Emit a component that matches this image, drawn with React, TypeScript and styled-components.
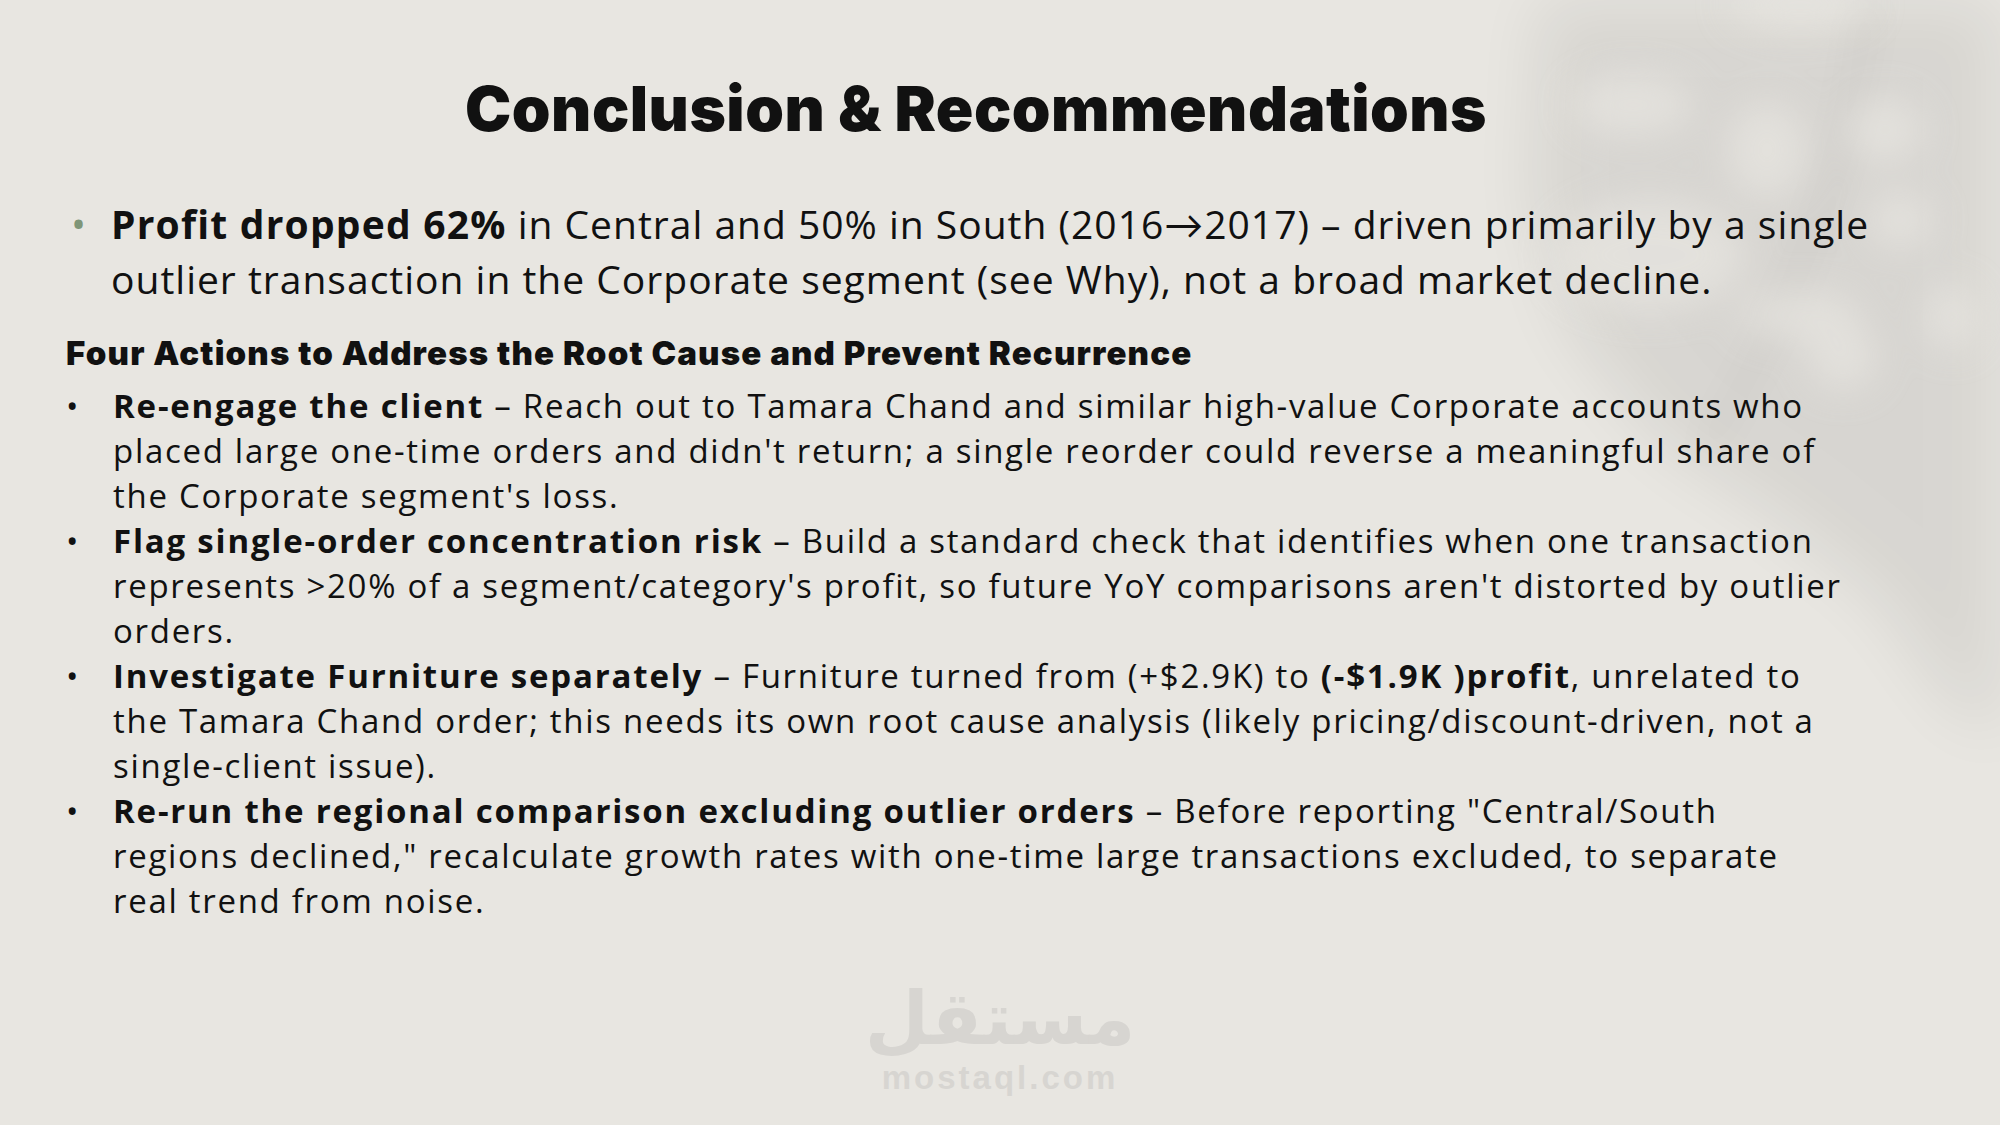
import React from "react";
import styled, { createGlobalStyle } from "styled-components";

const GlobalStyle = createGlobalStyle`
  html, body {
    margin: 0;
    padding: 0;
    background: #e8e6e1;
  }
  * {
    box-sizing: border-box;
  }
`;

const Slide = styled.div`
  position: relative;
  width: 2000px;
  height: 1125px;
  overflow: hidden;
  background: #e8e6e1;
  font-family: "Open Sans", Lato, sans-serif;
  color: #111;
`;

const Shadow = styled.svg`
  position: absolute;
  top: 0;
  right: 0;
  pointer-events: none;
`;

const Content = styled.div`
  position: relative;
  display: flex;
  flex-direction: column;
  padding: 77px 114px 0 66px;
`;

const Title = styled.h1`
  margin: 0;
  text-align: center;
  font-family: Inter, "Liberation Sans", sans-serif;
  font-weight: 900;
  font-size: 62px;
  line-height: 64px;
  letter-spacing: 0.5px;
  white-space: nowrap;
`;

const Lead = styled.ul`
  margin: 55px 0 0 0;
  padding: 0;
  list-style: none;
`;

const LeadItem = styled.li`
  display: flex;
  font-size: 39px;
  line-height: 55px;
  letter-spacing: 1px;
  white-space: nowrap;
`;

const GreenDot = styled.span`
  flex: none;
  width: 45px;
  padding-left: 5px;
  color: #7f9678;
  font-size: 40px;
`;

const Section = styled.h2`
  margin: 27px 0 0 0;
  font-family: Inter, "Liberation Sans", sans-serif;
  font-weight: 900;
  font-size: 33px;
  line-height: 40px;
  letter-spacing: 1.15px;
`;

const Actions = styled.ul`
  margin: 10px 0 0 0;
  padding: 0;
  list-style: none;
`;

const Action = styled.li`
  display: flex;
  font-size: 33px;
  line-height: 45px;
  letter-spacing: 1.7px;
  white-space: nowrap;
`;

const Dot = styled.span`
  flex: none;
  width: 47px;
`;

const Text = styled.span`
  flex: 1;
`;

const B = styled.b<{ $spacing: number }>`
  font-weight: 700;
  letter-spacing: ${(p) => p.$spacing}px;
`;

const Mark = styled.div`
  position: absolute;
  left: 0;
  right: 0;
  top: 975px;
  display: flex;
  flex-direction: column;
  align-items: center;
  color: #d7d5d1;
  font-family: "DejaVu Sans", sans-serif;
  font-weight: 700;
`;

const MarkArabic = styled.div`
  font-size: 74px;
  line-height: 86px;
`;

const MarkLatin = styled.div`
  font-family: "Liberation Sans", sans-serif;
  font-size: 33px;
  line-height: 34px;
  letter-spacing: 3px;
`;

const actions = [
  {
    head: "Re-engage the client",
    body: (
      <>
        Reach out to Tamara Chand and similar high-value Corporate accounts who
        <br />
        placed large one-time orders and didn't return; a single reorder could reverse a meaningful share of
        <br />
        the Corporate segment's loss.
      </>
    ),
  },
  {
    head: "Flag single-order concentration risk",
    body: (
      <>
        Build a standard check that identifies when one transaction
        <br />
        represents &gt;20% of a segment/category's profit, so future YoY comparisons aren't distorted by outlier
        <br />
        orders.
      </>
    ),
  },
  {
    head: "Investigate Furniture separately",
    body: (
      <>
        Furniture turned from (+$2.9K) to <B $spacing={1.8}>(-$1.9K )profit</B>, unrelated to
        <br />
        the Tamara Chand order; this needs its own root cause analysis (likely pricing/discount-driven, not a
        <br />
        single-client issue).
      </>
    ),
  },
  {
    head: "Re-run the regional comparison excluding outlier orders",
    body: (
      <>
        Before reporting "Central/South
        <br />
        regions declined," recalculate growth rates with one-time large transactions excluded, to separate
        <br />
        real trend from noise.
      </>
    ),
  },
];

// light gaps between the leaves of the plant shadow
const gaps = [
  { cx: 353, cy: 105, rx: 60, ry: 30 },
  { cx: 487, cy: 150, rx: 40, ry: 48 },
  { cx: 605, cy: 130, rx: 38, ry: 32 },
  { cx: 520, cy: 5, rx: 70, ry: 24 },
  { cx: 620, cy: 220, rx: 32, ry: 28 },
  { cx: 563, cy: 357, rx: 34, ry: 32 },
  { cx: 672, cy: 317, rx: 26, ry: 32 },
  { cx: 370, cy: 255, rx: 95, ry: 55 },
  { cx: 520, cy: 315, rx: 60, ry: 24 },
];

export default function App() {
  return (
    <>
      <GlobalStyle />
      <Slide>
        <Shadow width="720" height="820" viewBox="0 0 720 820">
          <defs>
            <filter id="soft" x="-40%" y="-40%" width="180%" height="180%">
              <feGaussianBlur stdDeviation="32" />
            </filter>
            <filter id="gap" x="-80%" y="-80%" width="260%" height="260%">
              <feGaussianBlur stdDeviation="18" />
            </filter>
          </defs>
          <path
            d="M260 0 L720 0 L720 740 L670 700 L600 600 L500 520 L380 440 L290 330 L250 200 Z"
            fill="#000"
            opacity="0.065"
            filter="url(#soft)"
          />
          <path
            d="M600 0 C 585 130, 540 280, 430 460 L 415 450 C 520 280, 565 130, 575 0 Z"
            fill="#000"
            opacity="0.03"
            filter="url(#gap)"
          />
          <g fill="#e8e6e1" opacity="0.7" filter="url(#gap)">
            {gaps.map((g, i) => (
              <ellipse key={i} cx={g.cx} cy={g.cy} rx={g.rx} ry={g.ry} />
            ))}
          </g>
        </Shadow>
        <Content>
          <Title>Conclusion &amp; Recommendations</Title>
          <Lead>
            <LeadItem>
              <GreenDot>•</GreenDot>
              <Text>
                <B $spacing={1.2}>Profit dropped 62%</B> in Central and 50% in South (2016→2017) – driven
                primarily by a single
                <br />
                outlier transaction in the Corporate segment (see Why), not a broad market decline.
              </Text>
            </LeadItem>
          </Lead>
          <Section>Four Actions to Address the Root Cause and Prevent Recurrence</Section>
          <Actions>
            {actions.map((a) => (
              <Action key={a.head}>
                <Dot>•</Dot>
                <Text>
                  <B $spacing={1.8}>{a.head}</B> – {a.body}
                </Text>
              </Action>
            ))}
          </Actions>
        </Content>
        <Mark>
          <MarkArabic>مستقل</MarkArabic>
          <MarkLatin>mostaql.com</MarkLatin>
        </Mark>
      </Slide>
    </>
  );
}
